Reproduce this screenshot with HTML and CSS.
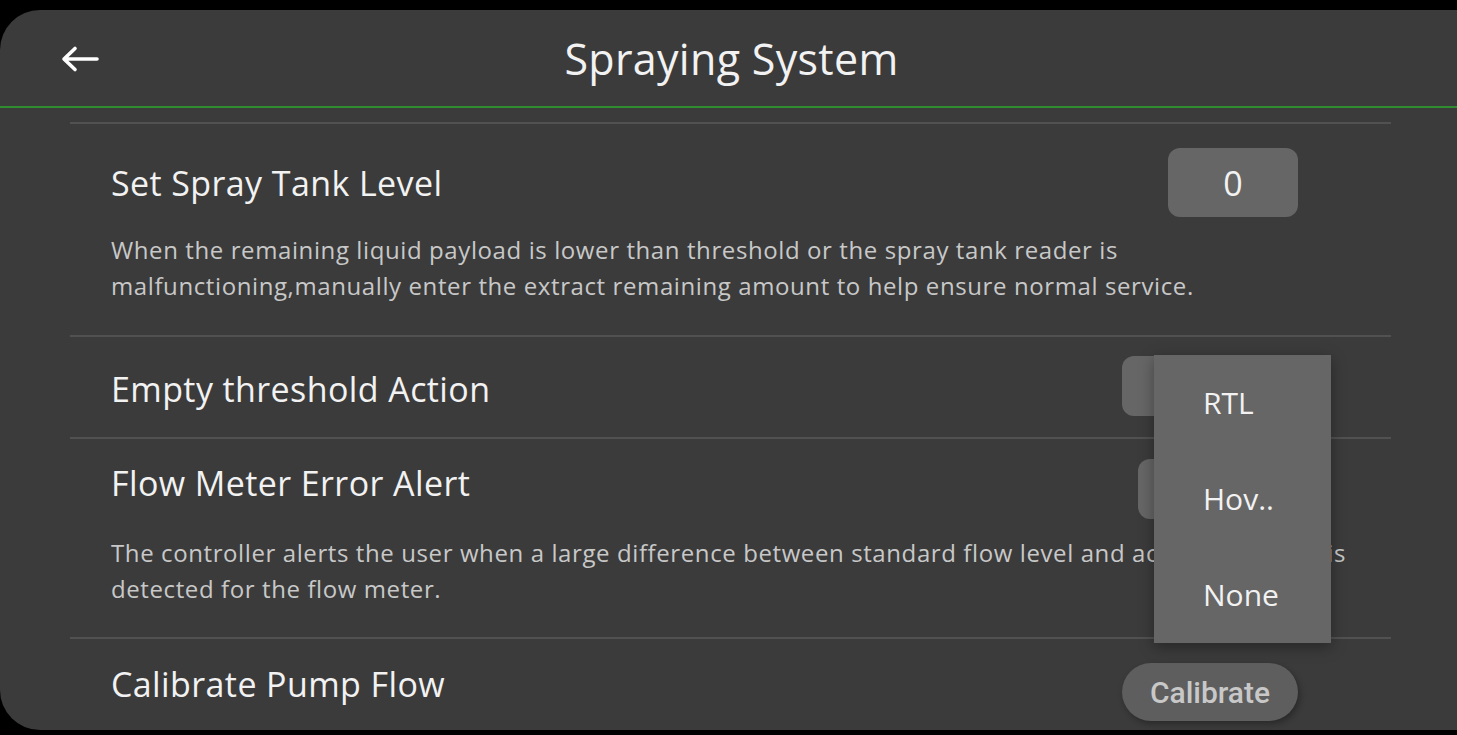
FILE: index.html
```html
<!DOCTYPE html>
<html lang="en">
<head>
  <meta charset="UTF-8" />
  <title>Spraying System</title>
  <link rel="stylesheet" href="styles.css">
</head>
<body>
  <div class="panel">
    <header class="topbar">
      <button class="back-btn" aria-label="Back">
        <svg width="40" height="28" viewBox="0 0 40 28">
          <path d="M37 14H5M15 3.5L4 14l11 10.5" fill="none" stroke="#fff" stroke-width="3.6" stroke-linecap="round" stroke-linejoin="round" />
        </svg>
      </button>
      <h1>Spraying System</h1>
    </header>

    <div class="settings">
      <div class="setting setting-tank">
        <div class="setting-head">
          <span class="setting-title">Set Spray Tank Level</span>
          <div class="value-box">0</div>
        </div>
        <p class="setting-desc">When the remaining liquid payload is lower than threshold or the spray tank reader is malfunctioning,manually enter the extract remaining amount to help ensure normal service.</p>
      </div>

      <div class="setting setting-empty">
        <div class="setting-head">
          <span class="setting-title">Empty threshold Action</span>
          <div class="select-box wide"></div>
        </div>
      </div>

      <div class="setting setting-flow">
        <div class="setting-head">
          <span class="setting-title">Flow Meter Error Alert</span>
          <div class="select-box"></div>
        </div>
        <p class="setting-desc">The controller alerts the user when a large difference between standard flow level and actual flow level is detected for the flow meter.</p>
      </div>

      <div class="setting setting-pump">
        <div class="setting-head">
          <span class="setting-title">Calibrate Pump Flow</span>
          <button class="pill-btn">Calibrate</button>
        </div>
      </div>
    </div>

    <ul class="dropdown">
      <li>RTL</li>
      <li>Hov..</li>
      <li>None</li>
    </ul>
  </div>
</body>
</html>
```

FILE: styles.css
```css
:root {
  --panel-bg: #3b3b3b;
  --line: #515151;
  --control: #666666;
  --accent: #2f8c2f;
  --text: #f2f2f2;
  --muted: #c8c8c8;
}

html, body {
  margin: 0;
  height: 100%;
  background: #000;
  overflow: hidden;
}

body {
  font-family: "Open Sans", Lato, sans-serif;
  color: var(--text);
  padding-top: 10px;
  box-sizing: border-box;
}

.panel {
  position: relative;
  height: 720px;
  background: var(--panel-bg);
  border-radius: 40px 0 0 40px;
  overflow: hidden;
}

.topbar {
  height: 96px;
  border-bottom: 2px solid var(--accent);
  display: flex;
  align-items: center;
  justify-content: center;
  position: relative;
}

.topbar h1 {
  margin: 0;
  font-size: 43px;
  font-weight: 400;
  letter-spacing: 0.3px;
  padding-left: 6px;
}

.back-btn {
  position: absolute;
  left: 60px;
  top: 35px;
  background: none;
  border: 0;
  padding: 0;
  cursor: pointer;
}

.settings {
  margin: 14px 66px 0 70px;
  border-top: 2px solid var(--line);
}

.setting {
  border-bottom: 2px solid var(--line);
  padding: 0 93px 0 41px;
}

.setting:last-child {
  border-bottom: 0;
}

.setting-head {
  display: flex;
  align-items: center;
  justify-content: space-between;
}

.setting-title {
  font-size: 34px;
  letter-spacing: 0.4px;
}

.setting-desc {
  margin: 0 -83px 0 0;
  font-size: 24px;
  letter-spacing: 0.6px;
  line-height: 36px;
  color: var(--muted);
}

.setting-tank { padding-top: 24px; padding-bottom: 31px; }
.setting-tank .setting-desc { margin-top: 15px; }
.setting-empty { padding-top: 19px; padding-bottom: 21px; }
.setting-empty .setting-title { margin-top: 6px; }
.setting-flow { padding-top: 20px; padding-bottom: 30px; }
.setting-flow .setting-title { margin-top: -12px; }
.setting-flow .setting-desc { margin-top: 16px; }
.setting-pump { padding-top: 24px; }
.setting-pump .setting-title { margin-top: -16px; }

.value-box {
  width: 130px;
  height: 69px;
  border-radius: 12px;
  background: var(--control);
  display: flex;
  align-items: center;
  justify-content: center;
  font-size: 34px;
}

.select-box {
  width: 160px;
  height: 60px;
  border-radius: 12px;
  background: var(--control);
}

.select-box.wide {
  width: 176px;
}

.pill-btn {
  width: 176px;
  height: 58px;
  border: 0;
  border-radius: 29px;
  background: #5e5e5e;
  color: var(--muted);
  font-family: Roboto, sans-serif;
  font-weight: 500;
  font-size: 30px;
  box-shadow: 2px 3px 6px rgba(0, 0, 0, 0.3);
}

.dropdown {
  position: absolute;
  left: 1154px;
  top: 345px;
  width: 177px;
  margin: 0;
  padding: 0;
  list-style: none;
  background: var(--control);
  box-shadow: 0 4px 14px rgba(0, 0, 0, 0.35);
}

.dropdown li {
  height: 96px;
  line-height: 96px;
  padding-left: 49px;
  font-size: 30px;
}
```
